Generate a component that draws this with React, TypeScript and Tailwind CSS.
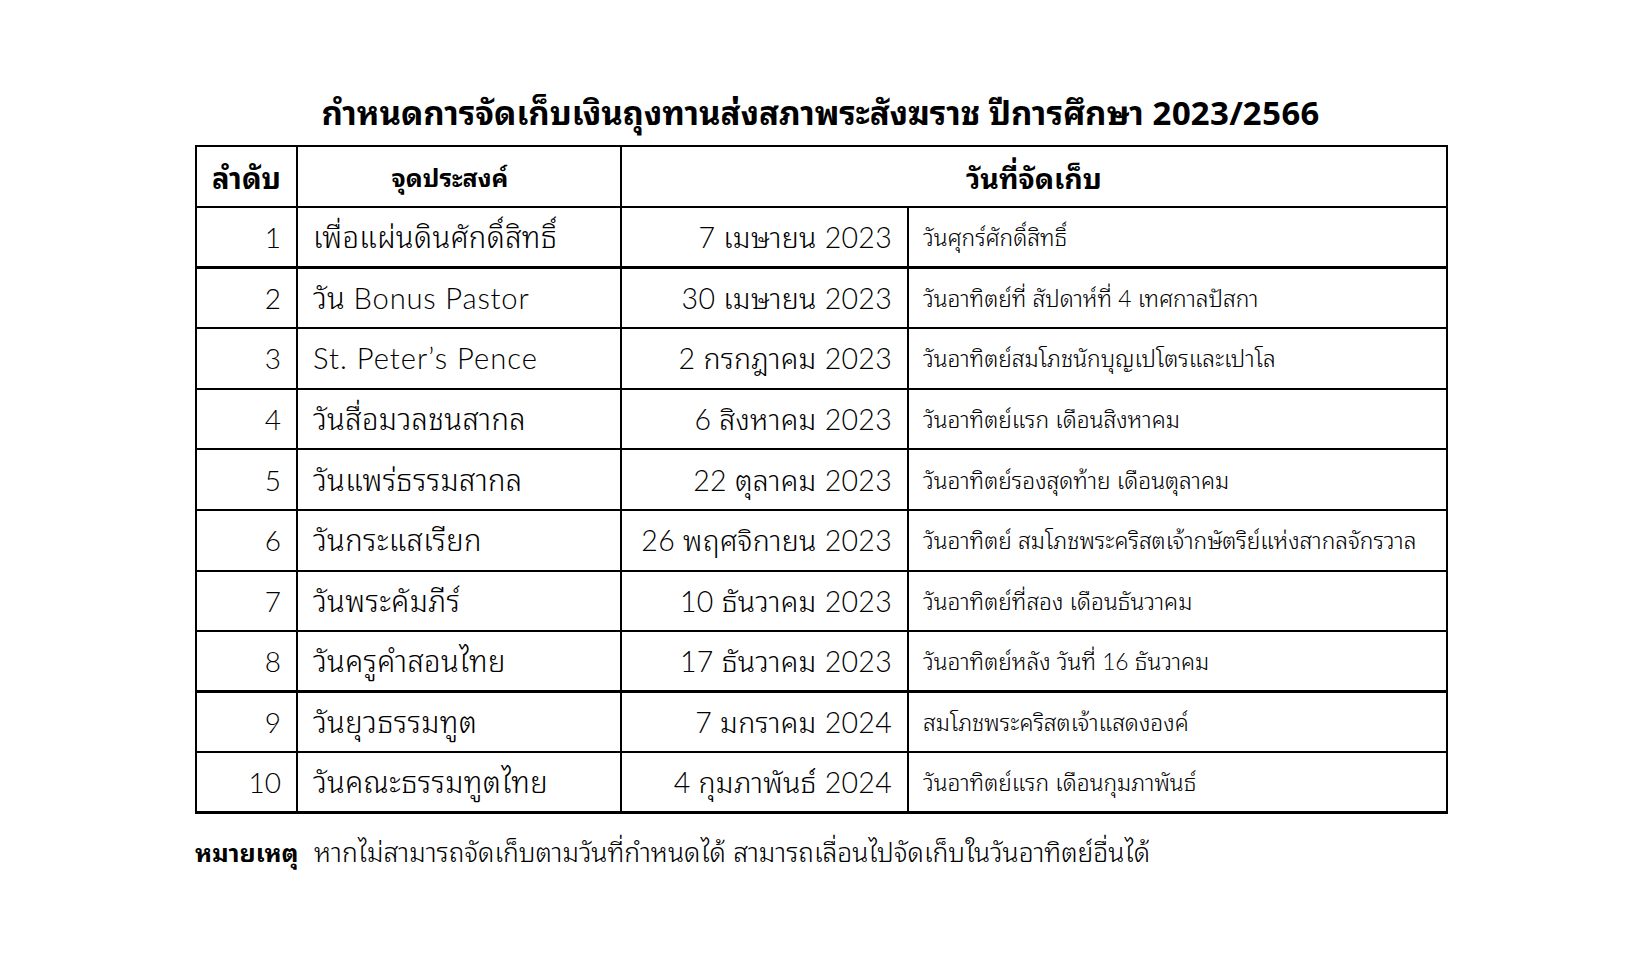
import React from "react";

const rows: [string, React.ReactNode, string, string][] = [
  ["1", "เพื่อแผ่นดินศักดิ์สิทธิ์", "7 เมษายน 2023", "วันศุกร์ศักดิ์สิทธิ์"],
  ["2", <>วัน <span className="tracking-[0.8px]">Bonus Pastor</span></>, "30 เมษายน 2023", "วันอาทิตย์ที่ สัปดาห์ที่ 4 เทศกาลปัสกา"],
  ["3", <span className="tracking-[1px]">St. Peter’s Pence</span>, "2 กรกฎาคม 2023", "วันอาทิตย์สมโภชนักบุญเปโตรและเปาโล"],
  ["4", "วันสื่อมวลชนสากล", "6 สิงหาคม 2023", "วันอาทิตย์แรก เดือนสิงหาคม"],
  ["5", "วันแพร่ธรรมสากล", "22 ตุลาคม 2023", "วันอาทิตย์รองสุดท้าย เดือนตุลาคม"],
  ["6", "วันกระแสเรียก", "26 พฤศจิกายน 2023", "วันอาทิตย์ สมโภชพระคริสตเจ้ากษัตริย์แห่งสากลจักรวาล"],
  ["7", "วันพระคัมภีร์", "10 ธันวาคม 2023", "วันอาทิตย์ที่สอง เดือนธันวาคม"],
  ["8", "วันครูคำสอนไทย", "17 ธันวาคม 2023", "วันอาทิตย์หลัง วันที่ 16 ธันวาคม"],
  ["9", "วันยุวธรรมทูต", "7 มกราคม 2024", "สมโภชพระคริสตเจ้าแสดงองค์"],
  ["10", "วันคณะธรรมทูตไทย", "4 กุมภาพันธ์ 2024", "วันอาทิตย์แรก เดือนกุมภาพันธ์"],
];

export default function App() {
  return (
    <div className="w-[1648px] h-[970px] bg-white text-black overflow-hidden font-[family-name:'Noto_Sans_Thai_Looped','Liberation_Sans',sans-serif]">
      <div className="ml-[195px] w-[1251px] pt-[88px]">
        <h1 className="text-center text-[33px] leading-[46px] font-bold h-[57px]">
          กำหนดการจัดเก็บเงินถุงทานส่งสภาพระสังฆราช ปีการศึกษา 2023/2566
        </h1>
        <table className="w-[1251px] border-collapse table-fixed">
          <colgroup>
            <col className="w-[101px]" />
            <col className="w-[324px]" />
            <col className="w-[287px]" />
            <col className="w-[539px]" />
          </colgroup>
          <thead>
            <tr className="h-[61px]">
              <th className="border-2 border-black text-[29px] font-bold text-center">ลำดับ</th>
              <th className="border-2 border-black text-[25px] font-bold text-center pr-[18px]">จุดประสงค์</th>
              <th colSpan={2} className="border-2 border-black text-[28.5px] font-bold text-center">
                วันที่จัดเก็บ
              </th>
            </tr>
          </thead>
          <tbody className="font-[family-name:'Lato','Noto_Sans_Thai_Looped',sans-serif] font-light">
            {rows.map((r, i) => {
              const thick = i === 0 || i === 7 || i === 9;
              const b = thick ? "border-2 border-b-[3px] border-black" : "border-2 border-black";
              return (
                <tr key={i} className="h-[60.6px]">
                  <td className={`${b} text-right pr-[15px] text-[28px] leading-[40px]`}>{r[0]}</td>
                  <td className={`${b} text-left pl-[15px] text-[29.2px] leading-[40px] tracking-[0.4px]`}>{r[1]}</td>
                  <td className={`${b} text-right pr-[15px] text-[28.5px] leading-[40px] tracking-[0.3px]`}>{r[2]}</td>
                  <td className={`${b} text-left pl-[14px] text-[22.8px] leading-[32px]`}>{r[3]}</td>
                </tr>
              );
            })}
          </tbody>
        </table>
        <div className="flex items-baseline mt-[19px] leading-[36px]">
          <span className="font-bold w-[119px] text-[25px]">หมายเหตุ</span>
          <span className="text-[26.5px] font-light font-[family-name:'Lato','Noto_Sans_Thai_Looped',sans-serif]">
            หากไม่สามารถจัดเก็บตามวันที่กำหนดได้ สามารถเลื่อนไปจัดเก็บในวันอาทิตย์อื่นได้
          </span>
        </div>
      </div>
    </div>
  );
}
